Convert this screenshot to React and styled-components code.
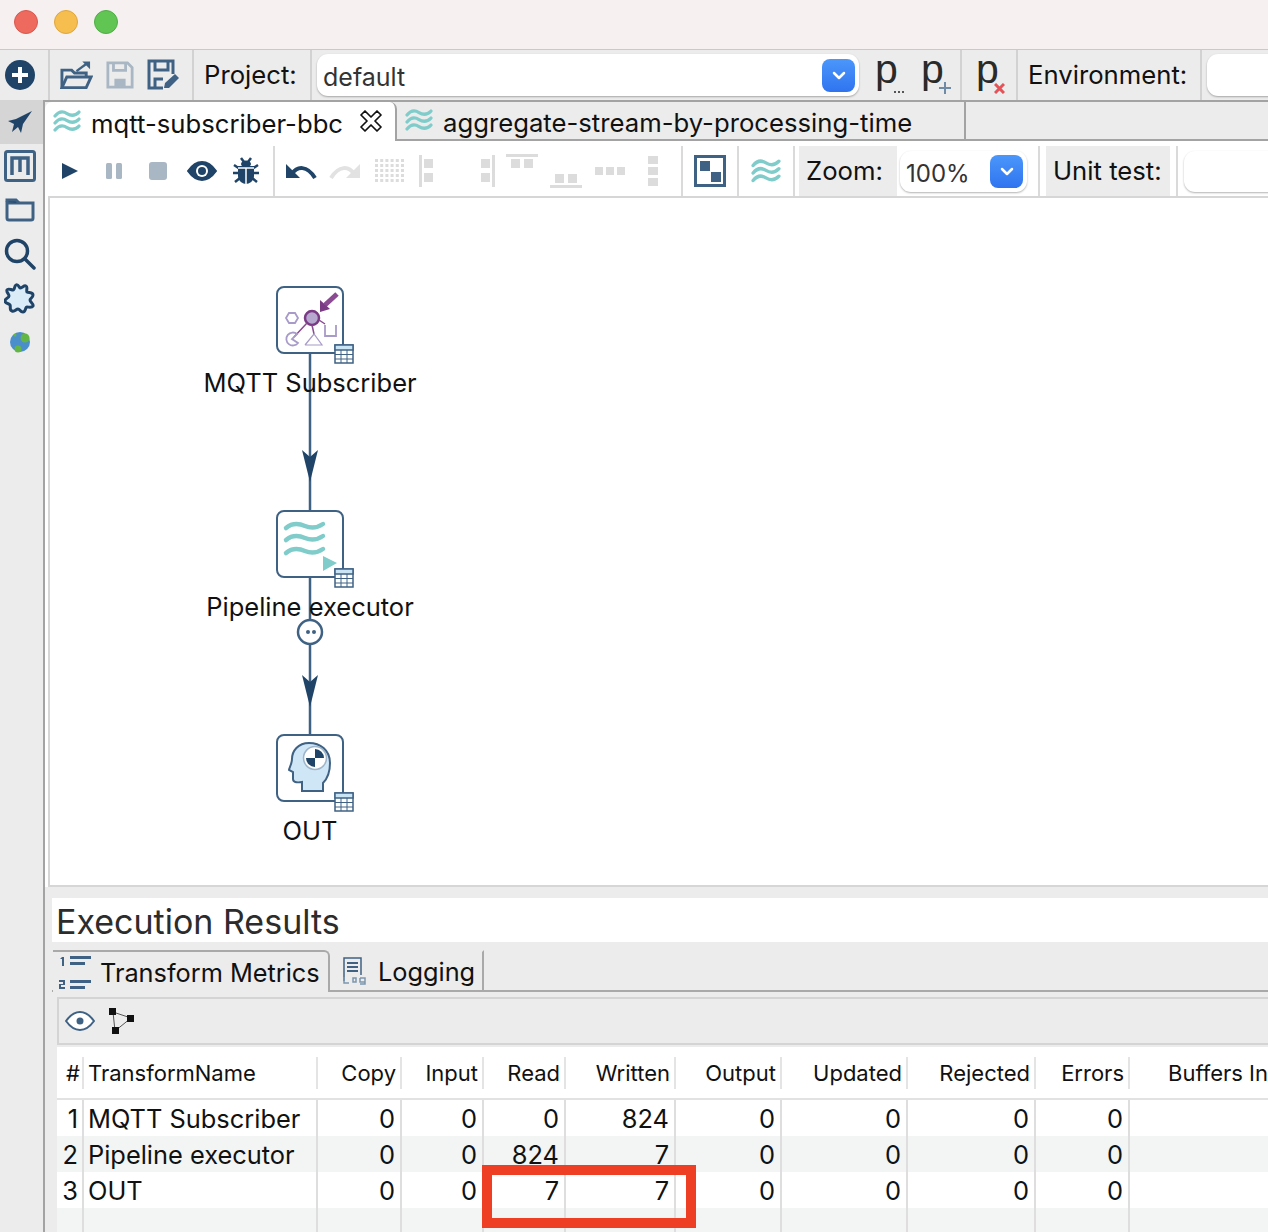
import styled, { createGlobalStyle } from "styled-components";

const NAVY = "#1f4468";
const STEEL = "#3f6284";
const FADED = "#a9b6c4";
const PALE = "#dcdcdc";
const TEAL = "#7fcccb";

const GlobalStyle = createGlobalStyle`
  html, body { margin: 0; padding: 0; background: #fff; }
  body { font-family: Inter, "Helvetica Neue", sans-serif; color: #111; }
  * { box-sizing: border-box; }
`;

const Waves = ({ w = 28, color = TEAL }) => (
  <svg width={w} height={w * 0.86} viewBox="0 0 28 24" fill="none" stroke={color} strokeWidth="3.200" strokeLinecap="round">
    <path d="M2 7C6 2 10 2 14 4.500S22 7 26 3" />
    <path d="M2 14C6 9 10 9 14 11.500S22 14 26 10" />
    <path d="M2 21C6 16 10 16 14 18.500S22 21 26 17" />
  </svg>
);

const PlusCircle = () => (
  <svg width="32" height="32" viewBox="0 0 32 32">
    <circle cx="16" cy="16" r="15" fill={NAVY} />
    <path d="M16 8v16M8 16h16" stroke="#fff" strokeWidth="4" />
  </svg>
);

const OpenFolder = () => (
  <svg width="33" height="32" viewBox="0 0 34 32" fill="none" stroke={STEEL} strokeWidth="3">
    <path d="M2 29V11h10l3 3h12v4" />
    <path d="M2 29l5-11h25l-5 11z" />
    <path d="M17 12l11-8" strokeWidth="2.500" />
    <path d="M23 2h8v8z" fill={STEEL} stroke="none" />
  </svg>
);

const Floppy = ({ color = FADED }) => (
  <svg width="28" height="28" viewBox="0 0 30 30" fill="none" stroke={color} strokeWidth="3">
    <path d="M2 2h21l5 5v21H2z" />
    <path d="M8 2v8h13V2" />
    <rect x="9" y="19" width="12" height="9" fill={color} stroke="none" />
  </svg>
);

const SaveAs = () => (
  <svg width="32" height="32" viewBox="0 0 32 32" fill="none" stroke={STEEL} strokeWidth="3">
    <path d="M16 29H2V2h24v13" />
    <path d="M8 2v9h13V2" />
    <path d="M8 29v-9h8" />
    <path d="M17 29l1-5L28 15l4 4-10 10z" fill={STEEL} stroke="none" />
  </svg>
);

const PIcon = ({ badge }) => (
  <PGlyph>
    p
    {badge === "more" && (
      <svg width="12" height="4" viewBox="0 0 12 4"><path d="M1 2h2M5 2h2M9 2h2" stroke="#555" strokeWidth="2" /></svg>
    )}
    {badge === "add" && (
      <svg width="12" height="12" viewBox="0 0 12 12"><path d="M6 0v12M0 6h12" stroke="#6f8ba6" strokeWidth="2" /></svg>
    )}
    {badge === "remove" && (
      <svg width="11" height="11" viewBox="0 0 11 11"><path d="M1 1l9 9M10 1l-9 9" stroke="#e2545a" strokeWidth="3" /></svg>
    )}
  </PGlyph>
);

const Plane = () => (
  <svg width="26" height="26" viewBox="0 0 26 26">
    <path d="M25 2L9 10 1 12l6 3-2 8 6-5 3 6 2-9z" fill={NAVY} />
  </svg>
);

const MBox = () => (
  <svg width="32" height="32" viewBox="0 0 32 32" fill="none" stroke={STEEL}>
    <rect x="1.500" y="1.500" width="29" height="29" rx="2" strokeWidth="3" />
    <path d="M8 25V8h16v17M16 8v14" strokeWidth="3.500" />
  </svg>
);

const FolderIcon = () => (
  <svg width="30" height="24" viewBox="0 0 30 24" fill="none" stroke={STEEL} strokeWidth="3">
    <path d="M2 20V5h26v15a2 2 0 0 1-2 2H4a2 2 0 0 1-2-2z" />
    <path d="M2 4V2h9l3 3" fill={NAVY} />
  </svg>
);

const SearchIcon = () => (
  <svg width="32" height="32" viewBox="0 0 32 32" fill="none" stroke={NAVY} strokeWidth="3.500" strokeLinecap="round">
    <circle cx="13" cy="13" r="10.500" />
    <path d="M21 21l9 9" />
  </svg>
);

const GearStar = () => (
  <svg width="32" height="32" viewBox="0 0 32 32">
    <path
      d="M12 3c2-1 3 2 4 3 2 0 4-3 6-2s0 4 1 6c2 1 6 0 6 3s-3 3-3 5 4 4 3 6-4 1-6 1-1 5-4 5-3-3-5-3-3 3-6 2-1-4-2-6-5-1-5-4 4-3 4-5-3-4-2-6 4 0 6 0 1-4 3-5z"
      fill="#d9ecf8"
      stroke={NAVY}
      strokeWidth="3"
      strokeLinejoin="round"
    />
  </svg>
);

const Globe = () => (
  <svg width="22" height="24" viewBox="0 0 22 24">
    <circle cx="11" cy="12" r="10" fill="#4a8fcb" />
    <circle cx="16" cy="8" r="4.500" fill="#63b545" />
    <circle cx="9" cy="19" r="3.500" fill="#63b545" />
    <circle cx="6" cy="5" r="1.500" fill="#63b545" />
  </svg>
);

const CloseX = () => (
  <svg width="22" height="22" viewBox="0 0 22 22">
    <path
      d="M1 5L5 1l6 6 6-6 4 4-6 6 6 6-4 4-6-6-6 6-4-4 6-6z"
      fill="#fff"
      stroke="#111"
      strokeWidth="1.700"
      strokeLinejoin="round"
    />
  </svg>
);

const Play = () => (
  <svg width="18" height="18" viewBox="0 0 18 18"><path d="M1 1l16 8-16 8z" fill={NAVY} /></svg>
);
const Pause = () => (
  <svg width="18" height="18" viewBox="0 0 18 18" fill={FADED}>
    <rect x="1" y="1" width="6" height="16" rx="1.500" />
    <rect x="11" y="1" width="6" height="16" rx="1.500" />
  </svg>
);
const Stop = () => (
  <svg width="20" height="20" viewBox="0 0 20 20"><rect x="1" y="1" width="18" height="18" rx="3" fill={FADED} /></svg>
);
const Eye = ({ thin }) => (
  <svg width="30" height="20" viewBox="0 0 30 20">
    <path
      d="M1 10C6 3 10 1 15 1s9 2 14 9c-5 7-9 9-14 9S6 17 1 10z"
      fill={thin ? "#fff" : NAVY}
      stroke={thin ? STEEL : NAVY}
      strokeWidth="2"
    />
    {!thin && <circle cx="15" cy="10" r="6" fill="#fff" />}
    <circle cx="15" cy="10" r={thin ? 3.500 : 4} fill={thin ? STEEL : NAVY} />
  </svg>
);
const Bug = () => (
  <svg width="26" height="28" viewBox="0 0 26 28" fill="none" stroke={NAVY} strokeWidth="2.500">
    <path d="M1 8l6 4M25 8l-6 4M0 16h6M26 16h-6M2 25l5-4M24 25l-5-4M8 1l3 4M18 1l-3 4" />
    <path d="M5 9h16v10c0 5-5 8-8 8s-8-3-8-8z" fill={NAVY} stroke="none" />
    <ellipse cx="13" cy="7" rx="5" ry="3.500" fill={NAVY} stroke="none" />
    <path d="M13 11v16M5 11h16" stroke="#fff" strokeWidth="1.500" />
  </svg>
);
const Undo = ({ redo }) => (
  <svg width="32" height="22" viewBox="0 0 32 22" style={redo ? { transform: "scaleX(-1)" } : undefined}>
    <path d="M7 14C12 6 22 5 30 18" fill="none" stroke={redo ? "#e2e2e2" : NAVY} strokeWidth="4" />
    <path d="M1 4v14h14z" fill={redo ? "#e2e2e2" : NAVY} />
  </svg>
);
const DotGrid = () => (
  <svg width="30" height="24" viewBox="0 0 30 24" fill={PALE}>
    {[0, 1, 2, 3, 4].map((r) =>
      [0, 1, 2, 3, 4, 5].map((c) => <rect key={`${r}-${c}`} x={c * 5.200} y={r * 5} width="3" height="3" />)
    )}
  </svg>
);
const AlignLeft = ({ flip }) => (
  <svg width="16" height="32" viewBox="0 0 16 32" fill={PALE} style={flip ? { transform: "scaleX(-1)" } : undefined}>
    <rect x="0" y="0" width="3" height="32" />
    <rect x="5" y="4" width="9" height="9" />
    <rect x="5" y="18" width="9" height="9" />
  </svg>
);
const AlignTop = ({ flip }) => (
  <svg width="32" height="16" viewBox="0 0 32 16" fill={PALE} style={flip ? { transform: "scaleY(-1)" } : undefined}>
    <rect x="0" y="0" width="32" height="3" />
    <rect x="5" y="5" width="9" height="9" />
    <rect x="18" y="5" width="9" height="9" />
  </svg>
);
const DistH = () => (
  <svg width="30" height="8" viewBox="0 0 30 8" fill={PALE}>
    <rect x="0" y="0" width="8" height="8" />
    <rect x="11" y="0" width="8" height="8" />
    <rect x="22" y="0" width="8" height="8" />
  </svg>
);
const DistV = () => (
  <svg width="10" height="30" viewBox="0 0 10 30" fill={PALE}>
    <rect x="0" y="0" width="10" height="8" />
    <rect x="0" y="11" width="10" height="8" />
    <rect x="0" y="22" width="10" height="8" />
  </svg>
);
const Snap = () => (
  <svg width="32" height="32" viewBox="0 0 32 32">
    <rect x="1.500" y="1.500" width="29" height="29" fill="#fff" stroke={STEEL} strokeWidth="3" />
    <rect x="6" y="6" width="10" height="10" fill={STEEL} />
    <rect x="17" y="17" width="10" height="10" fill={STEEL} />
  </svg>
);
const Chevron = () => (
  <svg width="14" height="9" viewBox="0 0 14 9" fill="none" stroke="#fff" strokeWidth="2.500" strokeLinecap="round" strokeLinejoin="round">
    <path d="M2 2l5 5 5-5" />
  </svg>
);
const TableBadge = () => (
  <svg width="20" height="20" viewBox="0 0 20 20" fill="#fff" stroke={STEEL}>
    <rect x="1" y="1" width="18" height="18" strokeWidth="1.500" />
    <rect x="1" y="1" width="18" height="5" fill="#c9e4f5" strokeWidth="1.500" />
    <path d="M7 6v13M13 6v13M1 10.500h18M1 15h18" strokeWidth="1" />
  </svg>
);
const MqttIcon = () => (
  <svg width="63" height="63" viewBox="0 0 63 63" fill="none">
    <path d="M58 5L46 16" stroke="#8a4b92" strokeWidth="5" />
    <path d="M41 11l10 9-10 3z" fill="#7a3a84" />
    <circle cx="33" cy="29" r="7" fill="#b7a8cf" stroke="#7a3a84" strokeWidth="2.500" />
    <path d="M28 34L15 48M33 36l2 9M40 31l6 4" stroke="#8a4b92" strokeWidth="1.500" />
    <g stroke="#a89bc9" strokeWidth="1.800">
      <path d="M7 29l3-5h6l3 5-3 5h-6z" />
      <path d="M18 45a6.500 6.500 0 1 0 1 9l-6-4z" />
      <path d="M26 56l9-11 8 11h-17" strokeWidth="1.200" />
      <path d="M46 36v11h11V36" />
    </g>
  </svg>
);
const PipelineIcon = () => (
  <svg width="63" height="63" viewBox="0 0 63 63" fill="none">
    <g stroke={TEAL} strokeWidth="4.500" strokeLinecap="round">
      <path d="M7 15c6-5 12-5 19-2s12 2 18-2" />
      <path d="M7 27c6-5 12-5 19-2s12 2 18-2" />
      <path d="M7 40c6-5 12-5 19-2s12 2 18-2" />
    </g>
    <path d="M44 43l14 7-14 8z" fill={TEAL} />
  </svg>
);
const HeadIcon = () => (
  <svg width="63" height="63" viewBox="0 0 63 63">
    <path
      d="M44 54V46C50 40 51 33 51 26 51 13 41 6 30 6 19 6 13 14 13 22c0 5-3 9-3 11l4 2v7c0 3 3 4 9 3v9z"
      fill="#cfe6f7"
      stroke={STEEL}
      strokeWidth="2"
    />
    <circle cx="36" cy="21" r="11.500" fill="#fff" stroke="#9db4c9" strokeWidth="1.500" />
    <path d="M36 12a9 9 0 0 1 9 9h-9zM36 30a9 9 0 0 1-9-9h9z" fill={NAVY} />
  </svg>
);
const NumberList = () => (
  <svg width="34" height="36" viewBox="0 0 34 36" fill={STEEL}>
    <rect x="12" y="2" width="21" height="3" />
    <rect x="12" y="8" width="15" height="3" />
    <rect x="12" y="26" width="21" height="3" />
    <rect x="12" y="32" width="15" height="3" />
    <path d="M4 3h2v9H4V5H2z" />
    <path d="M1 26h6v5H3v2h4v2H1v-5h4v-2H1z" />
  </svg>
);
const LogIcon = () => (
  <svg width="26" height="28" viewBox="0 0 26 28" fill="none" stroke={STEEL} strokeWidth="1.500">
    <path d="M2 24V1h17v17" />
    <path d="M5 6h11M5 10h11M5 14h11" strokeWidth="2" />
    <path d="M2 20v6h5M11 21h3v4h-3zM18 21h5v6h-5M18 21v4h5" stroke="#7c96ae" />
  </svg>
);
const GraphIcon = () => (
  <svg width="26" height="26" viewBox="0 0 26 26">
    <path d="M4 4l18 6L6 23z" fill="none" stroke="#555" strokeWidth="1" />
    <rect x="0" y="0" width="7" height="7" fill="#111" />
    <rect x="18" y="7" width="7" height="7" fill="#111" />
    <rect x="3" y="19" width="7" height="7" fill="#111" />
  </svg>
);

const NODES = [
  { x: 226, y: 88, label: "MQTT Subscriber", icon: <MqttIcon /> },
  { x: 226, y: 312, label: "Pipeline executor", icon: <PipelineIcon /> },
  { x: 226, y: 536, label: "OUT", icon: <HeadIcon /> },
];

const COLUMNS = ["#", "TransformName", "Copy", "Input", "Read", "Written", "Output", "Updated", "Rejected", "Errors", "Buffers In"];
const ROWS = [
  ["1", "MQTT Subscriber", "0", "0", "0", "824", "0", "0", "0", "0", ""],
  ["2", "Pipeline executor", "0", "0", "824", "7", "0", "0", "0", "0", ""],
  ["3", "OUT", "0", "0", "7", "7", "0", "0", "0", "0", ""],
  ["", "", "", "", "", "", "", "", "", "", ""],
];

export default function App() {
  return (
    <Page>
      <GlobalStyle />
      <TitleBar>
        <Light $color="#ee6a5f" $edge="#d9574d" />
        <Light $color="#f6bd4f" $edge="#dfa63b" />
        <Light $color="#61c554" $edge="#50ad44" />
      </TitleBar>

      <MainToolbar>
        <Section $w={50} $pad={4}><PlusCircle /></Section>
        <Section $w={144} $gap={13} $pad={10}>
          <OpenFolder />
          <Floppy />
          <SaveAs />
        </Section>
        <Section $w={118} $pad={10}><BarLabel>Project:</BarLabel></Section>
        <Section $w={650} $pad={5} $gap={16}>
          <Combo $w={542}>
            <ComboText>default</ComboText>
            <ComboButton><Chevron /></ComboButton>
          </Combo>
          <PIcon badge="more" />
          <PIcon badge="add" />
        </Section>
        <Section $w={56} $pad={14}><PIcon badge="remove" /></Section>
        <Section $w={184} $pad={10}><BarLabel>Environment:</BarLabel></Section>
        <Section $grow $pad={5} $plain><Combo $w={120} /></Section>
      </MainToolbar>

      <Body>
        <Sidebar>
          <SideTile $active><Plane /></SideTile>
          <SideTile><MBox /></SideTile>
          <SideTile><FolderIcon /></SideTile>
          <SideTile><SearchIcon /></SideTile>
          <SideTile><GearStar /></SideTile>
          <SideTile><Globe /></SideTile>
        </Sidebar>

        <Main>
          <TabStrip>
            <Tab $active $w={352}>
              <Waves />
              <TabText>mqtt-subscriber-bbc</TabText>
              <TabClose><CloseX /></TabClose>
            </Tab>
            <Tab $w={569}>
              <Waves />
              <TabText>aggregate-stream-by-processing-time</TabText>
            </Tab>
          </TabStrip>

          <PipelineToolbar>
            <ToolGroup $w={227}>
              <Slot $w={44}><Play /></Slot>
              <Slot $w={44}><Pause /></Slot>
              <Slot $w={44}><Stop /></Slot>
              <Slot $w={44}><Eye /></Slot>
              <Slot $w={44}><Bug /></Slot>
            </ToolGroup>
            <ToolGroup $w={408} $pad={4}>
              <Slot $w={44}><Undo /></Slot>
              <Slot $w={44}><Undo redo /></Slot>
              <Slot $w={45}><DotGrid /></Slot>
              <Slot $w={30}><AlignLeft /></Slot>
              <Slot $w={30} $ml={30}><AlignLeft flip /></Slot>
              <Slot $w={40} $up={9}><AlignTop /></Slot>
              <Slot $w={48} $up={-9}><AlignTop flip /></Slot>
              <Slot $w={40}><DistH /></Slot>
              <Slot $w={46}><DistV /></Slot>
            </ToolGroup>
            <ToolGroup $w={56}><Slot $w={54}><Snap /></Slot></ToolGroup>
            <ToolGroup $w={56}><Slot $w={54}><Waves w={30} /></Slot></ToolGroup>
            <FieldLabel $w={98}>Zoom:</FieldLabel>
            <FieldSlot $w={143}>
              <Combo $w={127} $short>
                <ComboText $small>100%</ComboText>
                <ComboButton><Chevron /></ComboButton>
              </Combo>
            </FieldSlot>
            <FieldLabel $w={124} $ml={6}>Unit test:</FieldLabel>
            <FieldSlot $w={98} $lead>
              <Combo $w={120} $short />
            </FieldSlot>
          </PipelineToolbar>

          <CanvasWrap>
            <Canvas>
              <Edges width="600" height="690">
                <path d="M260 155V312M260 379V537" stroke={STEEL} strokeWidth="2.500" fill="none" />
                <path d="M252 252l8 7 8-7-8 32z" fill={NAVY} />
                <path d="M252 477l8 7 8-7-8 32z" fill={NAVY} />
                <circle cx="260" cy="434" r="12" fill="#fff" stroke={STEEL} strokeWidth="2.500" />
                <circle cx="258" cy="434" r="2" fill={STEEL} />
                <circle cx="264" cy="434" r="2" fill={STEEL} />
              </Edges>
              {NODES.map((node) => (
                <Node key={node.label} $x={node.x} $y={node.y}>
                  {node.icon}
                  <NodeBadge><TableBadge /></NodeBadge>
                  <NodeLabel>{node.label}</NodeLabel>
                </Node>
              ))}
            </Canvas>
          </CanvasWrap>

          <Results>
            <ResultsTitle>Execution Results</ResultsTitle>
            <ResultTabs>
              <ResultTab $active $w={277}>
                <NumberList />
                <span>Transform Metrics</span>
              </ResultTab>
              <ResultTab $w={154}>
                <LogIcon />
                <span>Logging</span>
              </ResultTab>
            </ResultTabs>
            <ResultsToolbar>
              <Eye thin />
              <GraphIcon />
            </ResultsToolbar>
            <MetricsTable>
              <HeaderRow>
                {COLUMNS.map((col, i) => (
                  <HeaderCell key={col} $left={i === 1} $last={i === 10}>{col}</HeaderCell>
                ))}
              </HeaderRow>
              {ROWS.map((row, r) => (
                <DataRow key={r} $alt={r % 2 === 1}>
                  {row.map((val, c) => (
                    <DataCell key={c} $left={c === 1} $last={c === 10}>{val}</DataCell>
                  ))}
                </DataRow>
              ))}
              <Highlight />
            </MetricsTable>
          </Results>
        </Main>
      </Body>
    </Page>
  );
}

const Page = styled.div`
  width: 1268px;
  height: 1232px;
  overflow: hidden;
  display: flex;
  flex-direction: column;
`;

const TitleBar = styled.div`
  height: 50px;
  flex: none;
  display: flex;
  align-items: center;
  gap: 16px;
  padding: 0 14px 6px;
  background: #f6f0f1;
  border-bottom: 1px solid #c9c9c9;
`;

const Light = styled.span`
  width: 24px;
  height: 24px;
  border-radius: 50%;
  background: ${(p) => p.$color};
  border: 1px solid ${(p) => p.$edge};
`;

const MainToolbar = styled.div`
  height: 50px;
  flex: none;
  display: flex;
  background: #ececec;
`;

const Section = styled.div`
  display: flex;
  align-items: center;
  width: ${(p) => (p.$w ? `${p.$w}px` : "auto")};
  flex: ${(p) => (p.$grow ? 1 : "none")};
  gap: ${(p) => p.$gap || 0}px;
  padding-left: ${(p) => p.$pad || 0}px;
  border-right: ${(p) => (p.$plain ? "none" : "2px solid #d2d2d2")};
`;

const BarLabel = styled.span`
  font-size: 25.700px;
  white-space: nowrap;
  padding-bottom: 2px;
`;

const Combo = styled.div`
  width: ${(p) => p.$w}px;
  height: ${(p) => (p.$short ? 41 : 42)}px;
  flex: none;
  display: flex;
  align-items: center;
  justify-content: space-between;
  padding: 0 4px 0 6px;
  background: #fff;
  border-radius: 11px;
  box-shadow: 0 1px 2px rgba(0, 0, 0, 0.3);
`;

const ComboText = styled.span`
  font-size: ${(p) => (p.$small ? 24 : 25)}px;
  color: #333;
  padding-top: 4px;
`;

const ComboButton = styled.span`
  width: 33px;
  height: 33px;
  display: flex;
  align-items: center;
  justify-content: center;
  border-radius: 8px;
  background: linear-gradient(#4b97fb, #2f74ef);
`;

const PGlyph = styled.span`
  position: relative;
  width: 30px;
  font-family: "Liberation Sans", sans-serif;
  font-size: 41px;
  line-height: 40px;
  height: 40px;
  margin-top: -12px;
  color: #2a2a2a;

  svg {
    position: absolute;
    left: 18px;
    bottom: -5px;
  }
`;

const Body = styled.div`
  flex: 1;
  min-height: 0;
  display: flex;
`;

const Sidebar = styled.div`
  width: 45px;
  flex: none;
  display: flex;
  flex-direction: column;
  background: #ececec;
  border-right: 2px solid #a3a3a3;
`;

const SideTile = styled.div`
  height: 44px;
  flex: none;
  display: flex;
  align-items: center;
  justify-content: center;
  padding-right: 3px;
  background: ${(p) => (p.$active ? "#d5d5d5" : "transparent")};
`;

const Main = styled.div`
  flex: 1;
  min-width: 0;
  display: flex;
  flex-direction: column;
  background: #fff;
`;

const TabStrip = styled.div`
  height: 41px;
  flex: none;
  display: flex;
  background: #ececec;
  border-top: 2px solid #a3a3a3;
  border-bottom: 2px solid #a3a3a3;
`;

const Tab = styled.div`
  position: relative;
  width: ${(p) => p.$w}px;
  height: ${(p) => (p.$active ? "39px" : "37px")};
  flex: none;
  display: flex;
  align-items: center;
  gap: 10px;
  padding-left: 8px;
  padding-right: 10px;
  background: ${(p) => (p.$active ? "#fff" : "transparent")};
  border-right: 2px solid #a3a3a3;
  border-top-left-radius: ${(p) => (p.$active ? "7px" : "0")};
  border-top-right-radius: ${(p) => (p.$active ? "7px" : "0")};
`;

const TabText = styled.span`
  font-size: 25.700px;
  white-space: nowrap;
  padding-top: 3px;
`;

const TabClose = styled.span`
  position: absolute;
  left: 315px;
  top: 8px;
  display: flex;
`;

const PipelineToolbar = styled.div`
  height: 55px;
  flex: none;
  display: flex;
  align-items: stretch;
  padding: 5px 0 0 3px;
  background: #fff;
`;

const ToolGroup = styled.div`
  width: ${(p) => p.$w}px;
  flex: none;
  display: flex;
  align-items: center;
  padding-left: ${(p) => p.$pad || 0}px;
  border-right: 2px solid #dadada;
`;

const Slot = styled.span`
  width: ${(p) => p.$w}px;
  flex: none;
  display: flex;
  justify-content: center;
  margin-left: ${(p) => p.$ml || 0}px;
  transform: translateY(${(p) => (p.$up ? -p.$up : 0)}px);
`;

const FieldLabel = styled.div`
  width: ${(p) => p.$w}px;
  flex: none;
  display: flex;
  align-items: center;
  padding: 0 0 2px 7px;
  margin-left: ${(p) => p.$ml || 4}px;
  font-size: 25.700px;
  white-space: nowrap;
  background: #ececec;
`;

const FieldSlot = styled.div`
  width: ${(p) => p.$w}px;
  flex: none;
  display: flex;
  align-items: center;
  padding-left: ${(p) => (p.$lead ? 6 : 3)}px;
  border-right: ${(p) => (p.$lead ? "none" : "2px solid #dadada")};
  border-left: ${(p) => (p.$lead ? "2px solid #dadada" : "none")};
  margin-left: ${(p) => (p.$lead ? 6 : 0)}px;
`;

const CanvasWrap = styled.div`
  height: 691px;
  flex: none;
  padding-left: 3px;
`;

const Canvas = styled.div`
  position: relative;
  height: 100%;
  background: #fff;
  border-top: 2px solid #d6d6d6;
  border-left: 2px solid #d6d6d6;
  border-bottom: 2px solid #d6d6d6;
`;

const Edges = styled.svg`
  position: absolute;
  left: 0;
  top: 0;
`;

const Node = styled.div`
  position: absolute;
  left: ${(p) => p.$x}px;
  top: ${(p) => p.$y}px;
  width: 68px;
  height: 68px;
  display: flex;
  align-items: center;
  justify-content: center;
  background: #fff;
  border: 2px solid ${STEEL};
  border-radius: 8px;
`;

const NodeBadge = styled.span`
  position: absolute;
  right: -12px;
  bottom: -12px;
  display: flex;
`;

const NodeLabel = styled.span`
  position: absolute;
  left: 50%;
  top: 79px;
  transform: translateX(-50%);
  font-size: 25.500px;
  white-space: nowrap;
`;

const Results = styled.div`
  flex: 1;
  min-height: 0;
  padding: 11px 0 0 7px;
  background: #ececec;
  display: flex;
  flex-direction: column;
`;

const ResultsTitle = styled.div`
  height: 44px;
  flex: none;
  display: flex;
  align-items: center;
  padding: 2px 0 0 4px;
  font-size: 34px;
  color: #2c2c2c;
  background: #fff;
`;

const ResultTabs = styled.div`
  height: 42px;
  flex: none;
  margin-top: 8px;
  padding-left: 1px;
  display: flex;
  border-bottom: 2px solid #a9a9a9;
`;

const ResultTab = styled.div`
  width: ${(p) => p.$w}px;
  height: ${(p) => (p.$active ? "42px" : "40px")};
  flex: none;
  display: flex;
  align-items: center;
  gap: ${(p) => (p.$active ? 8 : 10)}px;
  padding-left: ${(p) => (p.$active ? 5 : 12)}px;
  font-size: 25.300px;
  white-space: nowrap;
  background: #ececec;
  border-top: 2px solid ${(p) => (p.$active ? "#a9a9a9" : "transparent")};
  border-right: 2px solid #a9a9a9;
  border-top-right-radius: ${(p) => (p.$active ? "6px" : "0")};
`;

const ResultsToolbar = styled.div`
  height: 48px;
  flex: none;
  margin: 5px 0 0 5px;
  display: flex;
  align-items: center;
  gap: 14px;
  padding-left: 6px;
  border: 2px solid #d4d4d4;
  border-right: none;
`;

const MetricsTable = styled.div`
  position: relative;
  flex: 1;
  min-height: 0;
  margin: 2px 0 0 5px;
  background: #fff;
  overflow: hidden;
`;

const TEMPLATE = "27px 234px 84px 82px 82px 110px 106px 126px 128px 94px 142px";

const HeaderRow = styled.div`
  height: 53px;
  display: grid;
  grid-template-columns: ${TEMPLATE};
  align-items: center;
  border-bottom: 2px solid #e2e2e2;
`;

const HeaderCell = styled.div`
  height: 32px;
  display: flex;
  align-items: center;
  justify-content: ${(p) => (p.$left ? "flex-start" : "flex-end")};
  padding: 0 4px;
  font-size: 22px;
  white-space: nowrap;
  border-right: ${(p) => (p.$last ? "none" : "2px solid #e4e4e4")};

  &:first-child {
    padding-right: 2px;
  }
`;

const DataRow = styled.div`
  height: 36px;
  display: grid;
  grid-template-columns: ${TEMPLATE};
  background: ${(p) => (p.$alt ? "#f3f4f4" : "#fff")};
`;

const DataCell = styled.div`
  display: flex;
  align-items: center;
  justify-content: ${(p) => (p.$left ? "flex-start" : "flex-end")};
  padding: 0 5px 0 ${(p) => (p.$left ? 4 : 5)}px;
  font-size: 25.400px;
  white-space: nowrap;
  border-right: ${(p) => (p.$last ? "none" : "2px solid #dedede")};

  &:first-child {
    padding-right: 4px;
  }
`;

const Highlight = styled.div`
  position: absolute;
  left: 425px;
  top: 118px;
  width: 214px;
  height: 63px;
  border: 10px solid #ee3f24;
`;
